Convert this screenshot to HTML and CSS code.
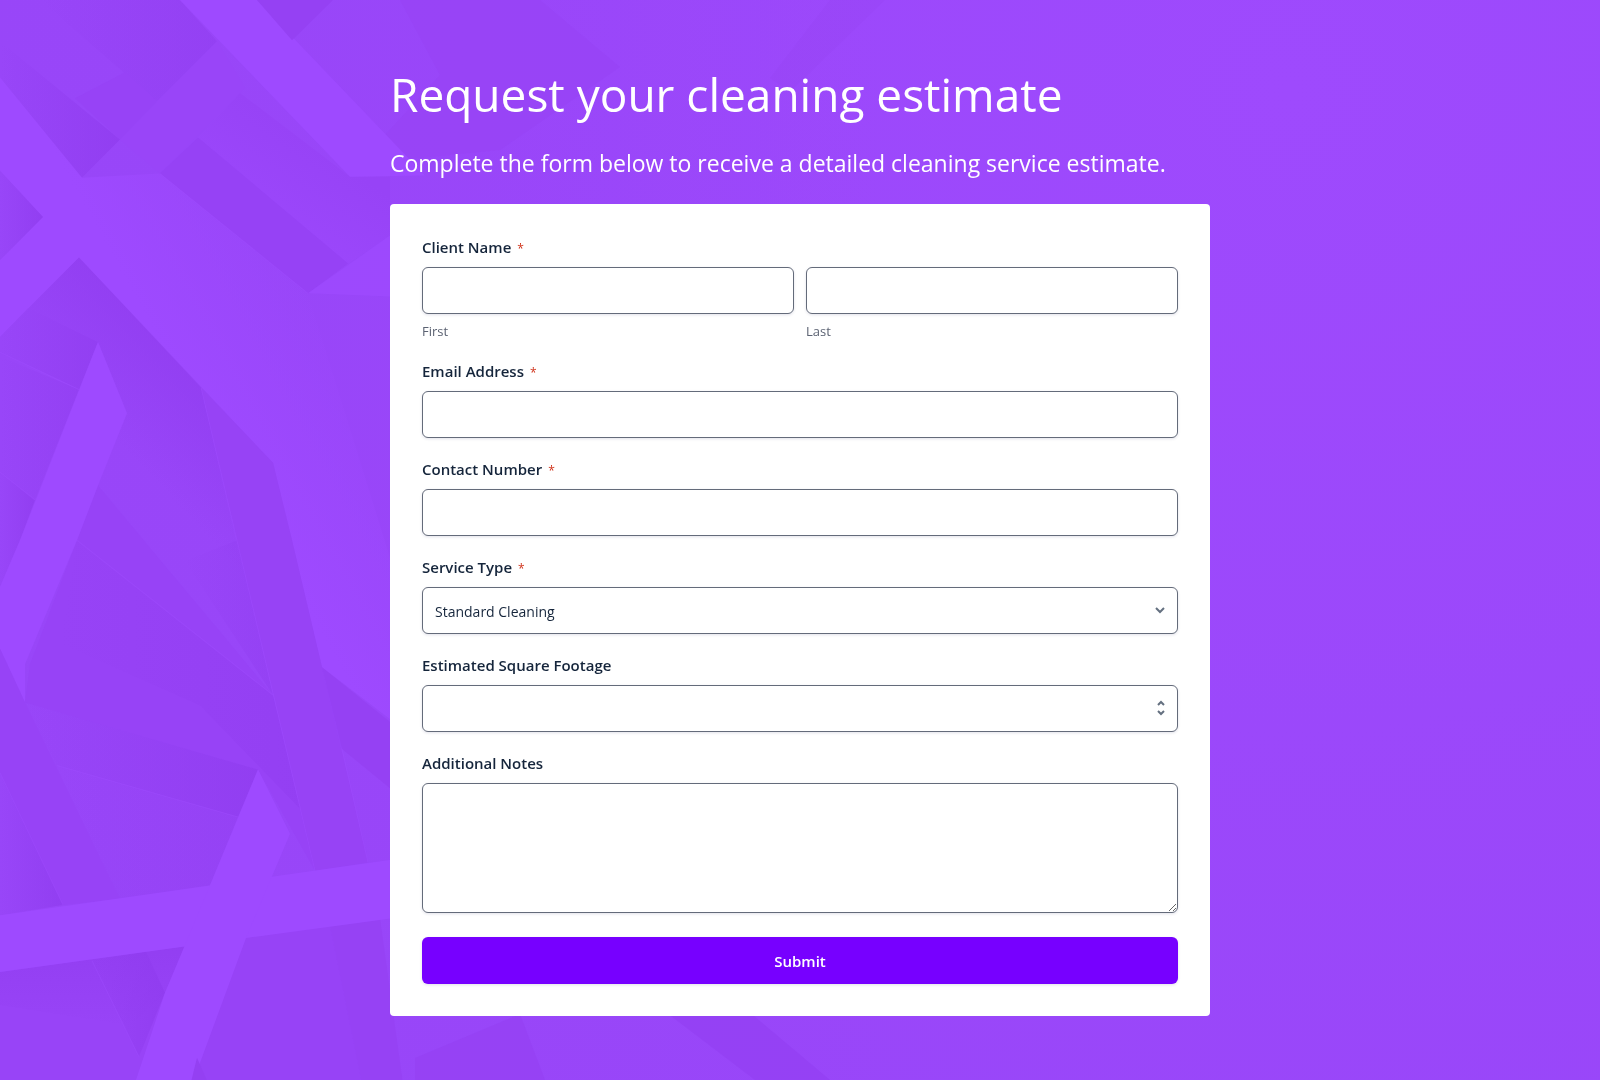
FILE: index.html
```
<!DOCTYPE html>
<html lang="en">
<head>
    <meta charset="UTF-8">
    <meta name="viewport" content="width=device-width, initial-scale=1.0">
    <title>Request your cleaning estimate</title>
    <link rel="stylesheet" href="styles.css">
</head>
<body>
    <svg class="backdrop" viewBox="0 0 1600 1080" preserveAspectRatio="xMinYMin slice" aria-hidden="true">
        <defs>
            <linearGradient id="shadeRight">
                <stop offset="0" stop-color="#8f3bee" stop-opacity="0"/>
                <stop offset="1" stop-color="#8f3bee" stop-opacity=".7"/>
            </linearGradient>
            <linearGradient id="shadeDown" x1="0" y1="0" x2="0" y2="1">
                <stop offset="0" stop-color="#8f3bee" stop-opacity=".6"/>
                <stop offset="1" stop-color="#8f3bee" stop-opacity="0"/>
            </linearGradient>
            <linearGradient id="shadeDiag" gradientUnits="userSpaceOnUse" x1="180" y1="352" x2="110" y2="420">
                <stop offset="0" stop-color="#8f3bee" stop-opacity=".6"/>
                <stop offset="1" stop-color="#8f3bee" stop-opacity="0"/>
            </linearGradient>
            <linearGradient id="strip" gradientUnits="userSpaceOnUse" x1="240" y1="220" x2="300" y2="130">
                <stop offset="0" stop-color="#9c48fc"/>
                <stop offset="1" stop-color="#9743f6"/>
            </linearGradient>
            <linearGradient id="fade" gradientUnits="userSpaceOnUse" x1="170" y1="350" x2="310" y2="270">
                <stop offset="0" stop-color="#9e4aff"/>
                <stop offset="1" stop-color="#9e4aff" stop-opacity="0"/>
            </linearGradient>
            <linearGradient id="base">
                <stop offset="0" stop-color="#9a46f8"/>
                <stop offset=".3" stop-color="#9b47fa"/>
                <stop offset=".55" stop-color="#9e4afd"/>
            </linearGradient>
            <radialGradient id="glow" gradientUnits="userSpaceOnUse" cx="1290" cy="90" r="1150">
                <stop offset="0" stop-color="#9846f8" stop-opacity="0"/>
                <stop offset="1" stop-color="#9846f8" stop-opacity=".9"/>
            </radialGradient>
        </defs>
        <rect width="1600" height="1080" fill="url(#base)"/>
        <rect width="1600" height="1080" fill="url(#glow)"/>

        <!-- behind the heading -->
        <path d="M385 135 440 75 400 0H540L620 67 500 150 400 160z" fill="#9541f3" opacity=".4"/>
        <path d="M830 0H885L790 92 770 78z" fill="#9541f3" opacity=".3"/>

        <g transform="scale(1 1.033)">
            <!-- top left strips -->
            <path d="M0 40 120 135 82 172 0 90z" fill="url(#shadeRight)"/>
            <path d="M40 0H180L217 40 157 98z" fill="url(#shadeRight)" opacity=".7"/>
            <path d="M75 95 125 70 157 98 120 135z" fill="#9743f6"/>
            <path d="M120 135 217 40 245 85 160 168z" fill="#9945f8"/>
            <path d="M198 133 240 90 350 171H390V228L348 255z" fill="url(#strip)"/>
            <path d="M160 168 198 133 348 255 308 284z" fill="#9642f5"/>
            <path d="M180 0H257L425 170 350 171z" fill="#9e4aff"/>
            <path d="M257 0H333L292 39z" fill="#9541f3"/>
            <path d="M308 284 390 228V287z" fill="#9e4aff" opacity=".7"/>

            <!-- long diagonal and the shadow under it -->
            <path d="M79 249 28 298 98 331 127 400 98 470 250 583 201 375z" fill="url(#shadeDiag)"/>
            <path d="M0 75 82 172 160 168 308 284 390 540V696L322 646 292 523 273 448 79 249 0 326V252L43 210 0 165z" fill="url(#fade)"/>
            <path d="M0 165 43 210 0 252z" fill="url(#shadeRight)"/>
            <path d="M28 298 98 331 79 377 0 341V326z" fill="url(#shadeRight)" opacity=".9"/>
            <path d="M0 345 79 377 35 484 0 457z" fill="url(#shadeRight)" opacity=".7"/>
            <path d="M0 457 35 484 20 523 0 568z" fill="url(#shadeRight)"/>

            <!-- left centre -->
            <path d="M98 470 77 523 30 643 25 680 258 745 315 843 273 673z" fill="#9743f6"/>
            <path d="M201 375 273 448 292 523 322 646 368 835 315 843 237 523z" fill="#9743f5"/>
            <path d="M185 543 237 523 273 673z" fill="url(#shadeRight)" opacity=".6"/>
            <path d="M77 523 273 673 300 783 200 683 60 623z" fill="url(#shadeRight)" opacity=".6"/>
            <path d="M322 646 390 699V763L342 725z" fill="#9541f3"/>
            <path d="M98 331 127 400 98 470 77 523 25 643V680L0 628V568L20 523z" fill="#9e4aff"/>
            <path d="M0 628 25 680 120 870 63 876 0 748z" fill="#9743f6"/>
            <path d="M0 748 63 876 0 886z" fill="url(#shadeRight)"/>
            <path d="M25 680 258 745 238 791 57 741z" fill="url(#shadeRight)"/>
            <path d="M57 741 238 791 210 857 120 870z" fill="url(#shadeRight)" opacity=".5"/>

            <!-- lower left -->
            <path d="M0 941 185 916 165 961 130 1063H0z" fill="#9844f7"/>
            <path d="M0 941 185 916 165 961 130 993 0 973z" fill="url(#shadeDown)"/>
            <path d="M92 930 146 921 165 961 139 1023z" fill="url(#shadeRight)"/>
            <path d="M246 908 330 896 365 1063H207L197 1024z" fill="#9743f6"/>
            <path d="M330 896 380 889 405 1063H365z" fill="#9642f4"/>
            <path d="M0 886 400 831V888L246 908 0 941z" fill="#9e4aff"/>
            <path d="M258 745 290 807 246 908 187 1063H130L165 961 210 857z" fill="#9e4aff"/>
            <path d="M197 1024 207 1046 213 1063H187z" fill="#9440f2"/>

            <g class="edges">
                <path d="M201 375 237 523 315 843M160 168 308 284M77 523 273 673M0 341 79 377M57 741 238 791"/>
                <path d="M0 748 63 876M92 930 139 1023M342 725 368 835M0 457 35 484"/>
            </g>
        </g>

        <!-- below the card -->
        <path d="M415 1058 520 1014 545 1080H415z" fill="#9440f2" opacity=".6"/>
        <path d="M650 1000H735L830 1080H755z" fill="#9440f2" opacity=".8"/>
    </svg>

    <main class="page">
        <h1>Request your cleaning estimate</h1>
        <p class="intro">Complete the form below to receive a detailed cleaning service estimate.</p>

        <form class="card" id="estimateForm">
            <fieldset class="field">
                <legend>Client Name<span class="required">*</span></legend>
                <div class="name-row">
                    <div>
                        <input type="text" id="first" name="first" required>
                        <label class="hint" for="first">First</label>
                    </div>
                    <div>
                        <input type="text" id="last" name="last" required>
                        <label class="hint" for="last">Last</label>
                    </div>
                </div>
            </fieldset>

            <div class="field">
                <label for="email">Email Address<span class="required">*</span></label>
                <input type="email" id="email" name="email" required>
            </div>

            <div class="field">
                <label for="phone">Contact Number<span class="required">*</span></label>
                <input type="tel" id="phone" name="phone" required>
            </div>

            <div class="field">
                <label for="service">Service Type<span class="required">*</span></label>
                <div class="control">
                    <select id="service" name="service" required>
                        <option value="standard">Standard Cleaning</option>
                        <option value="deep">Deep Cleaning</option>
                        <option value="move">Move In/Out Cleaning</option>
                    </select>
                    <svg class="icon" width="10" height="16" viewBox="0 0 10 16"><path d="M1 6 5 10 9 6"/></svg>
                </div>
            </div>

            <div class="field">
                <label for="footage">Estimated Square Footage</label>
                <div class="control">
                    <input type="number" id="footage" name="footage" min="0">
                    <svg class="icon" width="8" height="16" viewBox="0 0 8 16"><path d="M1 5 4 2 7 5M1 11 4 14 7 11"/></svg>
                </div>
            </div>

            <div class="field">
                <label for="notes">Additional Notes</label>
                <textarea id="notes" name="notes"></textarea>
            </div>

            <button type="submit">Submit</button>
        </form>
    </main>
</body>
</html>
```
FILE: styles.css
```
* {
    box-sizing: border-box;
}
body {
    margin: 0;
    background-color: #9b47fa;
    color: #15253b;
    font-family: "Open Sans", "Noto Sans", sans-serif;
    font-size: 15px;
}
.backdrop {
    position: fixed;
    top: 0;
    left: 0;
    width: 100%;
    height: 100%;
    z-index: -1;
}
.edges {
    fill: none;
    stroke: #a14eff;
    stroke-opacity: 0.4;
}
.page {
    max-width: 820px;
    margin: 0 auto;
    padding: 64px 0;
}
h1 {
    margin: 0 0 24px;
    color: #fff;
    font-size: 46px;
    font-weight: 400;
    line-height: 60px;
}
.intro {
    margin: 0 0 26px;
    color: #fff;
    font-size: 23px;
    line-height: 30px;
}
.card {
    padding: 32px;
    background-color: #fff;
    border-radius: 4px;
}
.field {
    margin: 0 0 20px;
    padding: 0;
    border: none;
}
.field label, legend {
    display: block;
    margin-bottom: 8px;
    padding: 0;
    font-weight: 600;
    line-height: 23px;
}
.field .hint {
    margin: 8px 0 0;
    color: #5b6272;
    font-size: 13px;
    font-weight: 400;
    line-height: 18px;
}
.required {
    margin-left: 6px;
    color: #d0341c;
    font-size: 12px;
    font-weight: 400;
    line-height: 1;
}
.name-row {
    display: grid;
    grid-template-columns: 1fr 1fr;
    gap: 12px;
}
input, select, textarea {
    display: block;
    width: 100%;
    height: 47px;
    padding: 2px 12px 0;
    border: 1px solid #646b7a;
    border-radius: 6px;
    background-color: #fff;
    box-shadow: 0 1px 3px rgba(20, 20, 80, 0.12);
    color: #15253b;
    font-family: inherit;
    font-size: 14px;
    appearance: none;
}
input[type="number"] {
    appearance: textfield;
}
textarea {
    height: 130px;
    padding: 12px;
    resize: vertical;
}
.control {
    position: relative;
}
.icon {
    position: absolute;
    top: 15px;
    right: 13px;
    fill: none;
    stroke: #647080;
    stroke-width: 2;
    pointer-events: none;
}
button {
    display: block;
    width: 100%;
    height: 47px;
    margin-top: 24px;
    border: none;
    border-radius: 6px;
    background-color: #7700ff;
    box-shadow: 0 1px 3px rgba(20, 20, 80, 0.12);
    color: #fff;
    font-family: inherit;
    font-size: 15px;
    font-weight: 600;
    cursor: pointer;
}
button:hover {
    background-color: #6600db;
}
```
